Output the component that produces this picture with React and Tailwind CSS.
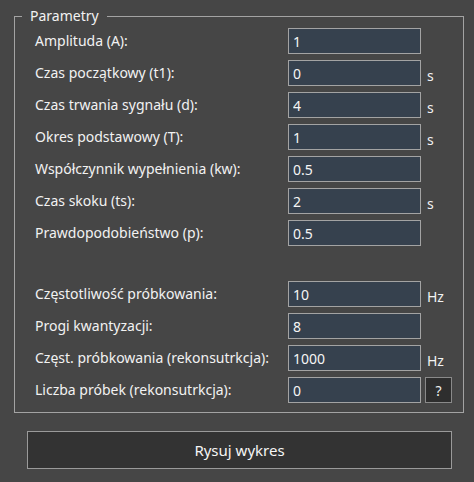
import React from "react";

const rows1 = [
  ["Amplituda (A):", "1", ""],
  ["Czas początkowy (t1):", "0", "s"],
  ["Czas trwania sygnału (d):", "4", "s"],
  ["Okres podstawowy (T):", "1", "s"],
  ["Współczynnik wypełnienia (kw):", "0.5", ""],
  ["Czas skoku (ts):", "2", "s"],
  ["Prawdopodobieństwo (p):", "0.5", ""],
];

const rows2 = [
  ["Częstotliwość próbkowania:", "10", "Hz"],
  ["Progi kwantyzacji:", "8", ""],
  ["Częst. próbkowania (rekonsutrkcja):", "1000", "Hz"],
  ["Liczba próbek (rekonsutrkcja):", "0", "?"],
];

function Row({ label, value, unit }) {
  return (
    <div className="flex items-center h-[26px]">
      <div className="w-[253px] text-[14px] text-[#f2f2f2] leading-none">{label}</div>
      <input
        defaultValue={value}
        className="w-[133px] h-[26px] bg-[#36414e] border border-[#a3a3a3] text-[#f5f5f5] text-[14px] px-[4px] outline-none"
        style={{ fontFamily: "inherit" }}
      />
      {unit === "?" ? (
        <button className="ml-[4px] w-[27px] h-[26px] bg-[#2e2e2e] border border-[#8a8a8a] text-[#f0f0f0] text-[14px] flex items-center justify-center">
          ?
        </button>
      ) : (
        <div className="ml-[6px] text-[14px] text-[#f2f2f2] pt-[4px]">{unit}</div>
      )}
    </div>
  );
}

export default function App() {
  return (
    <div
      className="w-[474px] h-[482px] bg-[#464646] pt-[5px] px-[14px]"
      style={{ fontFamily: '"Noto Sans", "Open Sans", sans-serif' }}
    >
      <fieldset className="border border-[#a3a3a3] w-[450px] h-[408px] pl-[20px] pt-[1px]">
        <legend className="-ml-[13px] px-[8px] text-[14px] text-[#f2f2f2] leading-[22px]">Parametry</legend>
        <div className="flex flex-col gap-[6px]">
          {rows1.map(([l, v, u]) => (
            <Row key={l} label={l} value={v} unit={u} />
          ))}
        </div>
        <div className="flex flex-col gap-[6px] mt-[35px]">
          {rows2.map(([l, v, u]) => (
            <Row key={l} label={l} value={v} unit={u} />
          ))}
        </div>
      </fieldset>
      <button className="mt-[18px] ml-[13px] w-[425px] h-[38px] bg-[#333333] border border-[#9a9a9a] text-[#f5f5f5] text-[15px]">
        Rysuj wykres
      </button>
    </div>
  );
}
